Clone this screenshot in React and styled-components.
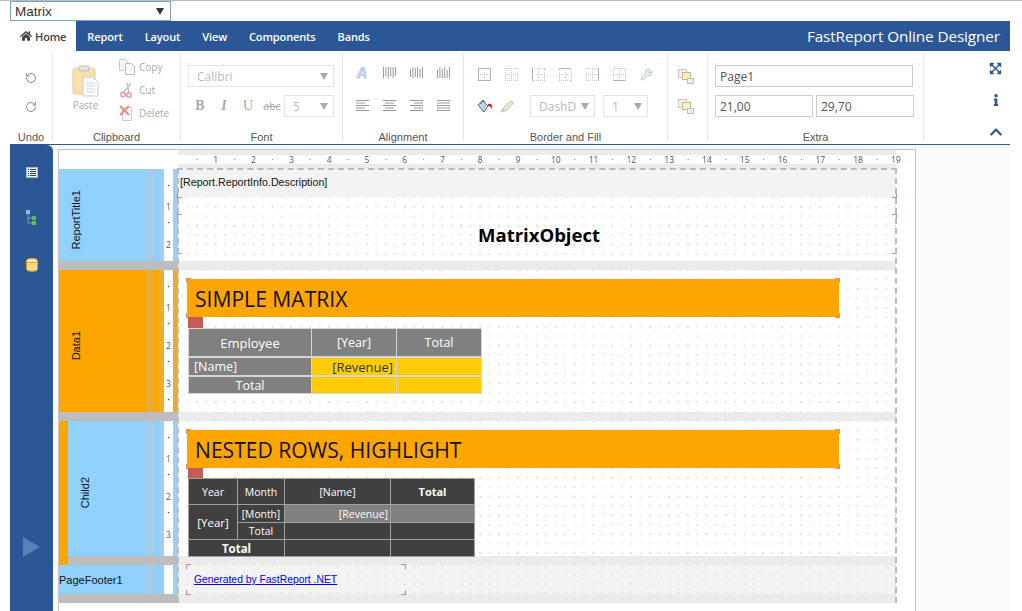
import React from "react";
import styled, { createGlobalStyle, css } from "styled-components";
import { FaHome, FaInfo, FaChevronUp, FaExpandArrowsAlt } from "react-icons/fa";
import { RotateCcw, RotateCw, Wrench } from "lucide-react";

const uiFont = `"Open Sans", "Noto Sans", "Liberation Sans", sans-serif`;
const smallFont = `"Liberation Sans", Arial, sans-serif`;
const blue = "#2b5797";

const GlobalStyle = createGlobalStyle`
  html, body {
    margin: 0;
    padding: 0;
    background: #fff;
    font-family: ${uiFont};
  }
  * { box-sizing: border-box; }
`;

const Root = styled.div`
  width: 1022px;
  height: 611px;
  overflow: hidden;
  border-top: 1px solid #bbb;
  padding: 0 12px 0 10px;
`;

const ReportSelect = styled.div`
  width: 161px;
  height: 20px;
  border: 1px solid #7a9fd4;
  display: flex;
  align-items: center;
  justify-content: space-between;
  padding: 0 6px 0 4px;
  font-family: ${smallFont};
  font-size: 13.5px;
  color: #333;
`;

const Arrow = styled.span`
  width: 0;
  height: 0;
  border-left: 4px solid transparent;
  border-right: 4px solid transparent;
  border-top: 7px solid ${(p) => (p.$muted ? "#aaa" : "#333")};
`;

const NavBar = styled.div`
  height: 30px;
  background: ${blue};
  display: flex;
  align-items: stretch;
  color: #fff;
`;

const NavTab = styled.div`
  display: flex;
  align-items: center;
  gap: 3px;
  padding: ${(p) => (p.$active ? "0 10px" : "0 11px")};
  background: ${(p) => (p.$active ? "#fff" : "transparent")};
  color: ${(p) => (p.$active ? "#444" : "#fff")};
  font-size: 11px;
  font-weight: 600;
  letter-spacing: -0.12px;
`;

const NavTitle = styled.div`
  margin-left: auto;
  padding-right: 10px;
  align-self: center;
  font-size: 15.3px;
  letter-spacing: -0.1px;
`;

const Ribbon = styled.div`
  height: 94px;
  display: flex;
  padding: 3px 0 3px;
  border-bottom: 1px solid ${blue};
  background: #fff;
`;

const Group = styled.div`
  width: ${(p) => p.$width}px;
  display: flex;
  flex-direction: column;
  border-right: ${(p) => (p.$plain ? "none" : "1px solid #e4e4e4")};
`;

const GroupBody = styled.div`
  flex: 1;
  min-height: 0;
  display: flex;
  flex-direction: ${(p) => p.$dir || "column"};
  align-items: ${(p) => p.$align || "stretch"};
  padding: ${(p) => p.$pad || "0"};
  gap: ${(p) => p.$gap || "0"};
`;

const GroupLabel = styled.div`
  height: 14px;
  line-height: 14px;
  margin-bottom: -3px;
  text-align: center;
  font-family: ${smallFont};
  font-size: 11px;
  color: #555;
`;

const ToolRow = styled.div`
  display: flex;
  align-items: center;
  height: 22px;
  gap: ${(p) => p.$gap || "0"};
  margin-bottom: ${(p) => p.$below || "0"};
`;

const IconSlot = styled.span`
  width: ${(p) => p.$w || 27}px;
  display: inline-flex;
  justify-content: center;
  align-items: center;
  flex: none;
`;

const SmallButton = styled.div`
  display: flex;
  align-items: center;
  height: 23px;
  gap: 4px;
  font-size: 10px;
  color: #aaa;
`;

const SmallButtons = styled.div`
  padding-top: 1px;
`;

const PasteButton = styled.div`
  width: 66px;
  display: flex;
  flex-direction: column;
  align-items: center;
  padding: 11px 1px 0 0;
  gap: 1px;
  font-size: 10px;
  color: #aaa;
`;

const FakeSelect = styled.div`
  width: ${(p) => p.$w}px;
  height: 22px;
  flex: none;
  margin-left: ${(p) => p.$ml || 0}px;
  display: flex;
  align-items: center;
  justify-content: space-between;
  padding: 0 5px 0 8px;
  border: 1px solid #e4e4e4;
  font-size: 12px;
  color: #bbb;
`;

const FieldInput = styled.div`
  width: ${(p) => p.$w}px;
  height: 22px;
  flex: none;
  border: 1px solid #ccc;
  display: flex;
  align-items: center;
  padding-left: 4px;
  font-size: 12px;
  color: #555;
`;

const FontGlyph = styled.span`
  width: ${(p) => p.$w || 24}px;
  text-align: center;
  font-family: ${(p) => (p.$sans ? uiFont : `"Liberation Serif", serif`)};
  font-size: ${(p) => (p.$sans ? "10.5px" : "14px")};
  font-weight: ${(p) => (p.$bold ? 700 : 400)};
  font-style: ${(p) => (p.$italic ? "italic" : "normal")};
  text-decoration: ${(p) => p.$line || "none"};
  color: #aaa;
`;

const SideTools = styled.div`
  flex: 1;
  display: flex;
  flex-direction: column;
  align-items: center;
  color: ${blue};
  padding: 8px 0 0 57px;
  gap: 19px;
`;

const Workspace = styled.div`
  height: 466px;
  display: flex;
  background: #fafafa;
`;

const Sidebar = styled.div`
  width: 43px;
  background: ${blue};
  border-top-right-radius: 6px;
  display: flex;
  flex-direction: column;
  align-items: center;
  padding: 22px 0 54px;
  gap: 32px;
`;

const PlayMark = styled.div`
  margin-top: auto;
  width: 0;
  height: 0;
  border-top: 10px solid transparent;
  border-bottom: 10px solid transparent;
  border-left: 17px solid #5b80b6;
`;

const PageWrap = styled.div`
  padding: 4px 0 0 5px;
`;

const Page = styled.div`
  width: 858px;
  height: 462px;
  background: #fff;
  border: 1px solid #c4c4c4;
  border-bottom: none;
  display: flex;
`;

const BandColumn = styled.div`
  width: 119px;
  flex: none;
  padding-top: 19px;
`;

const SheetColumn = styled.div`
  width: 718px;
  flex: none;
`;

const TopRuler = styled.div`
  height: 19px;
  background: #ebebeb;
  padding-top: 5px;
`;

const TopRulerScale = styled.div`
  height: 9px;
  background: #fff;
  display: flex;
  padding-left: 9.45px;
`;

const RulerMark = styled.span`
  width: 18.9px;
  flex: none;
  text-align: center;
  font-size: 8.5px;
  line-height: 10px;
  color: #555;
  white-space: nowrap;
`;

const BandHeader = styled.div`
  height: ${(p) => p.$height}px;
  display: flex;
  background: ${(p) => (p.$orange ? "#ffa500" : "#90d1ff")};
`;

const BandTitle = styled.div`
  width: ${(p) => p.$width || 86}px;
  flex: none;
  display: flex;
  align-items: center;
  justify-content: ${(p) => (p.$flat ? "flex-start" : "center")};
  padding: ${(p) => (p.$flat ? "0" : `9px ${p.$right || 53}px 0 0`)};
  font-family: ${smallFont};
  font-size: 11px;
  color: #111;
  ${(p) =>
    !p.$flat &&
    css`
      & > span {
        writing-mode: vertical-rl;
        transform: rotate(180deg);
      }
    `}
`;

const BandStrip = styled.div`
  width: ${(p) => p.$width}px;
  flex: none;
  background: ${(p) => (p.$orange ? p.$hot : p.$cool)};
`;

const SideRuler = styled.div`
  width: 9px;
  flex: none;
  background: #fff;
  display: flex;
  flex-direction: column;
  align-items: center;
  padding-top: 10.5px;
  overflow: hidden;
`;

const SideRulerMark = styled.span`
  height: 18.9px;
  flex: none;
  font-size: 8.5px;
  line-height: 18.9px;
  color: #555;
`;

const SideRulerDot = styled(SideRulerMark)`
  font-weight: 700;
  color: #333;
  transform: translateY(-3px);
`;

const BandGap = styled.div`
  height: 9px;
  background: #bdbdbd;
`;

const ChildBand = styled.div`
  display: flex;
`;

const ChildEdge = styled.div`
  width: 9px;
  flex: none;
  background: #ffa500;
`;

const ChildBody = styled.div`
  flex: 1;
  min-width: 0;
`;

const Sheet = styled.div`
  position: relative;
`;

const SheetFrame = styled.div`
  position: absolute;
  top: -1px;
  left: -1px;
  right: -1px;
  height: 435px;
  border: 2px dashed #bbb;
  border-bottom: none;
  pointer-events: none;
  z-index: 3;
`;

const dots = css`
  background-image: radial-gradient(circle, #c4c4c4 0.5px, transparent 0.8px),
    radial-gradient(circle, #e2e2e2 0.6px, transparent 0.9px);
  background-size: 18.9px 18.9px, 9.45px 9.45px;
  background-position: -9.45px -9.45px, -4.72px -4.72px;
`;

const ReportBand = styled.div`
  height: ${(p) => p.$height}px;
  padding: ${(p) => p.$pad || "0"};
  background-color: ${(p) => (p.$shaded ? "#f3f3f3" : "#fff")};
  ${dots}
`;

const ReportGap = styled.div`
  height: 9px;
  background: #ebebeb;
`;

const InfoText = styled.div`
  position: relative;
  height: 28px;
  background: #f3f3f3;
  padding: 6px 0 0 2px;
  font-family: ${smallFont};
  font-size: 10.7px;
  line-height: 15px;
  color: #111;
`;

const TitleObject = styled.div`
  position: relative;
  height: 38px;
  margin-top: 18px;
  display: flex;
  align-items: center;
  justify-content: center;
  padding-left: 4px;
  font-size: 18.5px;
  font-weight: 700;
  color: #000;
`;

const Banner = styled.div`
  position: relative;
  width: 652px;
  height: 38px;
  margin-left: 9px;
  background: #ffa500;
  display: flex;
  align-items: center;
  padding-left: 8px;
  font-size: 21.1px;
  color: #111;
`;

const MatrixTab = styled.div`
  width: 15px;
  height: ${(p) => p.$height}px;
  margin-left: 10px;
  background: #c45c5c;
`;

const Matrix = styled.div`
  display: inline-grid;
  margin-left: 10px;
  padding: 1px;
  vertical-align: top;
  grid-template-columns: ${(p) => p.$cols};
  grid-template-rows: ${(p) => p.$rows};
  gap: ${(p) => p.$gap};
  background: ${(p) => p.$line};
`;

const Cell = styled.div`
  display: flex;
  align-items: center;
  justify-content: ${(p) => p.$justify || "center"};
  padding: ${(p) => p.$pad || "0"};
  background: ${(p) => p.$bg};
  color: ${(p) => p.$color || "#fff"};
  font-size: ${(p) => p.$size || 12}px;
  font-weight: ${(p) => (p.$bold ? 700 : 400)};
  grid-column: ${(p) => p.$colSpan || "auto"};
  grid-row: ${(p) => p.$rowSpan || "auto"};
  white-space: nowrap;
`;

const FooterLink = styled.div`
  position: relative;
  width: 218px;
  height: 29px;
  margin-left: 9px;
  padding: 8px 0 0 7px;
  font-family: ${smallFont};
  font-size: 10.35px;
  line-height: 14px;
  color: #00e;
  text-decoration: underline;
`;

const Corner = styled.i`
  position: absolute;
  width: 5px;
  height: 5px;
  border: 0 solid rgba(196, 80, 80, 0.65);
  ${(p) => (p.$y === "top" ? "top: -1px; border-top-width: 1.5px;" : "bottom: -1px; border-bottom-width: 1.5px;")}
  ${(p) => (p.$x === "left" ? "left: -1px; border-left-width: 1.5px;" : "right: -1px; border-right-width: 1.5px;")}
`;

function Corners() {
  return (
    <>
      <Corner $x="left" $y="top" />
      <Corner $x="right" $y="top" />
      <Corner $x="left" $y="bottom" />
      <Corner $x="right" $y="bottom" />
    </>
  );
}

function Lines({ rows, color = "#999" }) {
  return (
    <svg width="13" height="13" viewBox="0 0 13 13">
      {rows.map(([x1, x2], i) => (
        <line key={i} x1={x1} x2={x2} y1={1.5 + i * 2.5} y2={1.5 + i * 2.5} stroke={color} />
      ))}
    </svg>
  );
}

function Bars({ cols }) {
  return (
    <svg width="13" height="13" viewBox="0 0 13 13">
      {cols.map(([y1, y2], i) => (
        <line key={i} x1={0.5 + i * 2.4} x2={0.5 + i * 2.4} y1={y1} y2={y2} stroke="#999" />
      ))}
    </svg>
  );
}

function BorderBox({ edges = "" }) {
  const d = "#c8c8c8";
  const s = "#aab4bf";
  const edge = (key, x1, y1, x2, y2) => (
    <line
      x1={x1}
      y1={y1}
      x2={x2}
      y2={y2}
      stroke={edges.includes(key) ? s : d}
      strokeDasharray={edges.includes(key) ? "none" : "1 1"}
    />
  );
  return (
    <svg width="13" height="13" viewBox="0 0 13 13">
      {edge("x", 6.5, 0, 6.5, 13)}
      {edge("y", 0, 6.5, 13, 6.5)}
      {edge("t", 0, 0.5, 13, 0.5)}
      {edge("b", 0, 12.5, 13, 12.5)}
      {edge("l", 0.5, 0, 0.5, 13)}
      {edge("r", 12.5, 0, 12.5, 13)}
    </svg>
  );
}

function PasteIcon() {
  return (
    <svg width="28" height="32" viewBox="0 0 28 32">
      <rect x="1" y="3" width="22" height="26" rx="1.5" fill="#f8e0a8" stroke="#e4cf9c" />
      <rect x="7" y="1" width="10" height="5" rx="1" fill="#e2e2e2" stroke="#bdbdbd" />
      <path d="M11 12h10l5 5v14H11z" fill="#fbfbfb" stroke="#c6ccd4" />
      <path d="M14 18h9M14 21h9M14 24h9M14 27h9" stroke="#d0d6de" />
    </svg>
  );
}

function CopyIcon() {
  return (
    <svg width="16" height="16" viewBox="0 0 16 16">
      <path d="M.5.5h6l2 2v9h-8z" fill="#f4f4f4" stroke="#c4ccd8" />
      <path d="M6.5 4.5h6l3 3v8h-9z" fill="#fafafa" stroke="#b8c0cc" />
    </svg>
  );
}

function CutIcon() {
  return (
    <svg width="16" height="16" viewBox="0 0 16 16">
      <path d="M5 10 12 1M10 10 8 1" stroke="#b8c0cc" strokeWidth="1.4" fill="none" />
      <circle cx="4" cy="12.5" r="2.2" fill="none" stroke="#ea9a90" strokeWidth="1.4" />
      <circle cx="10" cy="13" r="2.2" fill="none" stroke="#ea9a90" strokeWidth="1.4" />
    </svg>
  );
}

function DeleteIcon() {
  return (
    <svg width="16" height="16" viewBox="0 0 16 16">
      <path d="M3.5 2.5h9v13h-9z" fill="#f6f6f6" stroke="#c4ccd8" />
      <path d="M1 1l9 9M10 1l-9 9" stroke="#ec8f80" strokeWidth="2" />
    </svg>
  );
}

function FontA() {
  return (
    <svg width="13" height="13" viewBox="0 0 13 13">
      <path d="M0 12.5 5 1h4l2 11.5H8L7.6 10H5l-1 2.500zM5.800 8h1.600L7 4.500z" fill="#bcd0ea" />
    </svg>
  );
}

function PaintIcon() {
  return (
    <svg width="16" height="14" viewBox="0 0 16 14">
      <path d="M1 6l5-4 5 5-4 6z" fill="#bcd6ea" stroke="#667" />
      <path d="M4 5C4 1 7 0 8 3" fill="none" stroke="#667" />
      <path d="M11 5c3-1 5 1 4 5-1-2-2-3-4-3z" fill="#d22" />
    </svg>
  );
}

function PenIcon() {
  return (
    <svg width="15" height="13" viewBox="0 0 15 13">
      <path d="M1 12l2-4 7-7 4 2-7 7z" fill="#f0e4c0" stroke="#c2cfe0" />
      <path d="M1 12l2-4 2 3z" fill="#b6c8e0" />
    </svg>
  );
}

function LayerIcon({ back, front }) {
  return (
    <svg width="16" height="15" viewBox="0 0 16 15">
      <rect x="0.500" y="0.500" width="8" height="8" fill={back} stroke="#c8c8c8" />
      <rect x="4.500" y="3.500" width="8" height="7" fill={front} stroke="#c8b880" />
      <rect x="9.500" y="9.500" width="6" height="5" fill="#eee" stroke="#c0c0c0" />
    </svg>
  );
}

function TableIcon() {
  return (
    <svg width="12" height="11" viewBox="0 0 12 11">
      <rect x="0.500" y="0.500" width="11" height="10" fill="#eef2f8" stroke="#a8b8d0" />
      <path d="M2 2.500h1M2 4.500h1M2 6.500h1M2 8.500h1M4 2.500h6M4 4.500h6M4 6.500h6M4 8.500h6" stroke="#2f3f55" />
    </svg>
  );
}

function TreeIcon() {
  return (
    <svg width="11" height="16" viewBox="0 0 11 16">
      <rect width="4" height="4" fill="#8fb4ea" />
      <path d="M2 4v9h4M2 8h4" stroke="#8a98a8" fill="none" />
      <rect x="6" y="6" width="4" height="4" fill="#5cc04a" />
      <rect x="6" y="11" width="4" height="4" fill="#5cc04a" />
    </svg>
  );
}

function DatabaseIcon() {
  return (
    <svg width="12" height="14" viewBox="0 0 12 14">
      <path d="M.5 2.500v9c0 2.400 11 2.400 11 0v-9z" fill="#f7d98c" stroke="#e09a18" />
      <ellipse cx="6" cy="2.500" rx="5.500" ry="2" fill="#fff4cc" stroke="#e09a18" />
    </svg>
  );
}

const tabs = ["Report", "Layout", "View", "Components", "Bands"];

const rulerMarks = Array.from({ length: 38 }, (_, i) =>
  i % 2 === 1 ? String((i + 1) / 2) : "·"
);

function ColumnRuler({ count }) {
  return (
    <SideRuler>
      {Array.from({ length: count }, (_, i) =>
        i % 2 === 1 ? (
          <SideRulerMark key={i}>{(i + 1) / 2}</SideRulerMark>
        ) : (
          <SideRulerDot key={i}>·</SideRulerDot>
        )
      )}
    </SideRuler>
  );
}

function BandStrips({ orange, count }) {
  return (
    <>
      <BandStrip $width={9} $orange={orange} $hot="#e8ac34" $cool="#a5cde9" />
      <BandStrip $width={5} $orange={orange} $hot="#fba808" $cool="#92d0fb" />
      <BandStrip $width={5} $orange={orange} $hot="#edad30" $cool="#a0cdf0" />
      <ColumnRuler count={count} />
      <BandStrip $width={5} $orange={orange} $hot="#e8ac34" $cool="#a0cdf0" />
    </>
  );
}

function App() {
  return (
    <Root>
      <GlobalStyle />
      <ReportSelect>
        Matrix
        <Arrow />
      </ReportSelect>
      <NavBar>
        <NavTab $active>
          <FaHome size={12} />
          Home
        </NavTab>
        {tabs.map((t) => (
          <NavTab key={t}>{t}</NavTab>
        ))}
        <NavTitle>FastReport Online Designer</NavTitle>
      </NavBar>

      <Ribbon>
        <Group $width={43}>
          <GroupBody $align="center" $pad="18px 0 0" $gap="17px">
            <RotateCcw size={12} color="#888" />
            <RotateCw size={12} color="#888" />
          </GroupBody>
          <GroupLabel>Undo</GroupLabel>
        </Group>
        <Group $width={128}>
          <GroupBody $dir="row">
            <PasteButton>
              <PasteIcon />
              Paste
            </PasteButton>
            <SmallButtons>
              <SmallButton>
                <CopyIcon />
                Copy
              </SmallButton>
              <SmallButton>
                <CutIcon />
                Cut
              </SmallButton>
              <SmallButton>
                <DeleteIcon />
                Delete
              </SmallButton>
            </SmallButtons>
          </GroupBody>
          <GroupLabel>Clipboard</GroupLabel>
        </Group>
        <Group $width={162}>
          <GroupBody $pad="11px 0 0 7px">
            <ToolRow $below="8px">
              <FakeSelect $w={146}>
                Calibri
                <Arrow $muted />
              </FakeSelect>
            </ToolRow>
            <ToolRow>
              <FontGlyph $bold>B</FontGlyph>
              <FontGlyph $italic $bold>I</FontGlyph>
              <FontGlyph>U</FontGlyph>
              <FontGlyph $sans $line="line-through" $w={24}>abc</FontGlyph>
              <FakeSelect $w={50}>
                5
                <Arrow $muted />
              </FakeSelect>
            </ToolRow>
          </GroupBody>
          <GroupLabel>Font</GroupLabel>
        </Group>
        <Group $width={121}>
          <GroupBody $pad="7px 0 0 6px">
            <ToolRow $below="11px">
              <IconSlot><FontA /></IconSlot>
              <IconSlot><Bars cols={[[1, 12], [1, 10], [1, 12], [1, 10], [1, 12], [1, 10]]} /></IconSlot>
              <IconSlot><Bars cols={[[3, 11], [1, 12], [2, 11], [1, 12], [3, 11], [1, 12]]} /></IconSlot>
              <IconSlot><Bars cols={[[4, 12], [1, 12], [3, 12], [1, 12], [4, 12], [1, 12]]} /></IconSlot>
            </ToolRow>
            <ToolRow>
              <IconSlot><Lines rows={[[0, 13], [0, 9], [0, 13], [0, 9], [0, 13]]} /></IconSlot>
              <IconSlot><Lines rows={[[0, 13], [2, 11], [0, 13], [2, 11], [0, 13]]} /></IconSlot>
              <IconSlot><Lines rows={[[0, 13], [4, 13], [0, 13], [4, 13], [0, 13]]} /></IconSlot>
              <IconSlot><Lines rows={[[0, 13], [0, 13], [0, 13], [0, 13], [0, 13]]} /></IconSlot>
            </ToolRow>
          </GroupBody>
          <GroupLabel>Alignment</GroupLabel>
        </Group>
        <Group $width={204}>
          <GroupBody $pad="9px 0 0 7px">
            <ToolRow $below="10px">
              <IconSlot><BorderBox edges="tblr" /></IconSlot>
              <IconSlot><BorderBox /></IconSlot>
              <IconSlot><BorderBox edges="l" /></IconSlot>
              <IconSlot><BorderBox edges="t" /></IconSlot>
              <IconSlot><BorderBox edges="r" /></IconSlot>
              <IconSlot><BorderBox edges="b" /></IconSlot>
              <IconSlot><Wrench size={13} color="#b8c8dc" /></IconSlot>
            </ToolRow>
            <ToolRow>
              <IconSlot><PaintIcon /></IconSlot>
              <IconSlot $w={19}><PenIcon /></IconSlot>
              <FakeSelect $w={65} $ml={13}>
                DashD
                <Arrow $muted />
              </FakeSelect>
              <FakeSelect $w={45} $ml={8}>
                1
                <Arrow $muted />
              </FakeSelect>
            </ToolRow>
          </GroupBody>
          <GroupLabel>Border and Fill</GroupLabel>
        </Group>
        <Group $width={40}>
          <GroupBody $align="center" $pad="15px 3px 0 0" $gap="15px">
            <LayerIcon back="#eee" front="#fbeeb8" />
            <LayerIcon back="#f2f2f2" front="#fbf0c8" />
          </GroupBody>
          <GroupLabel>&nbsp;</GroupLabel>
        </Group>
        <Group $width={216}>
          <GroupBody $pad="11px 0 0 7px">
            <ToolRow $below="8px">
              <FieldInput $w={198}>Page1</FieldInput>
            </ToolRow>
            <ToolRow $gap="3px">
              <FieldInput $w={98}>21,00</FieldInput>
              <FieldInput $w={98}>29,70</FieldInput>
            </ToolRow>
          </GroupBody>
          <GroupLabel>Extra</GroupLabel>
        </Group>
        <Group $width={86} $plain>
          <SideTools>
            <FaExpandArrowsAlt size={13} />
            <FaInfo size={12} />
            <FaChevronUp size={14} />
          </SideTools>
        </Group>
      </Ribbon>

      <Workspace>
        <Sidebar>
          <TableIcon />
          <TreeIcon />
          <DatabaseIcon />
          <PlayMark />
        </Sidebar>
        <PageWrap>
          <Page>
            <BandColumn>
              <BandHeader $height={92}>
                <BandTitle><span>ReportTitle1</span></BandTitle>
                <BandStrips count={4} />
              </BandHeader>
              <BandGap />
              <BandHeader $height={142} $orange>
                <BandTitle><span>Data1</span></BandTitle>
                <BandStrips orange count={7} />
              </BandHeader>
              <BandGap />
              <ChildBand>
                <ChildEdge />
                <ChildBody>
                  <BandHeader $height={135}>
                    <BandTitle $width={77} $right={43}><span>Child2</span></BandTitle>
                    <BandStrips count={6} />
                  </BandHeader>
                  <BandGap />
                </ChildBody>
              </ChildBand>
              <BandHeader $height={29}>
                <BandTitle $flat><span>PageFooter1</span></BandTitle>
                <BandStrip $width={9} $cool="#a5cde9" />
                <BandStrip $width={10} $cool="#92d0fb" />
                <SideRuler />
                <BandStrip $width={5} $cool="#a0cdf0" />
              </BandHeader>
              <BandGap />
            </BandColumn>

            <SheetColumn>
              <TopRuler>
                <TopRulerScale>
                  {rulerMarks.map((m, i) => (
                    <RulerMark key={i}>{m}</RulerMark>
                  ))}
                </TopRulerScale>
              </TopRuler>
              <Sheet>
                <SheetFrame />
                <ReportBand $height={92}>
                  <InfoText>
                    [Report.ReportInfo.Description]
                    <Corners />
                  </InfoText>
                  <TitleObject>
                    MatrixObject
                    <Corners />
                  </TitleObject>
                </ReportBand>
                <ReportGap />
                <ReportBand $height={142} $pad="9px 0 0">
                  <Banner>
                    SIMPLE MATRIX
                    <Corners />
                  </Banner>
                  <MatrixTab $height={11} />
                  <Matrix $cols="122px 84px 84px" $rows="27px 17px 16px" $gap="2px 1px" $line="#d4d4d4">
                    <Cell $bg="#808080" $size={13}>Employee</Cell>
                    <Cell $bg="#808080" $size={12.5}>[Year]</Cell>
                    <Cell $bg="#808080" $size={12.5}>Total</Cell>
                    <Cell $bg="#808080" $size={12.5} $justify="flex-start" $pad="0 0 0 5px">[Name]</Cell>
                    <Cell $bg="#ffcc00" $color="#333" $size={13} $justify="flex-end" $pad="0 3px 0 0">[Revenue]</Cell>
                    <Cell $bg="#ffcc00" />
                    <Cell $bg="#808080" $size={12.5}>Total</Cell>
                    <Cell $bg="#ffcc00" />
                    <Cell $bg="#ffcc00" />
                  </Matrix>
                </ReportBand>
                <ReportGap />
                <ReportBand $height={135} $pad="9px 0 0">
                  <Banner>
                    NESTED ROWS, HIGHLIGHT
                    <Corners />
                  </Banner>
                  <MatrixTab $height={10} />
                  <Matrix $cols="48px 46px 105px 83px" $rows="25px 17px 16px 16px" $gap="1px" $line="#a0a0a0">
                    <Cell $bg="#404040" $size={10.5}>Year</Cell>
                    <Cell $bg="#404040" $size={10.5}>Month</Cell>
                    <Cell $bg="#404040" $size={10.5}>[Name]</Cell>
                    <Cell $bg="#404040" $size={11} $bold>Total</Cell>
                    <Cell $bg="#404040" $size={11.5} $rowSpan="span 2">[Year]</Cell>
                    <Cell $bg="#404040" $size={10.3}>[Month]</Cell>
                    <Cell $bg="#808080" $size={10.5} $justify="flex-end" $pad="0 2px 0 0">[Revenue]</Cell>
                    <Cell $bg="#808080" />
                    <Cell $bg="#404040" $size={10.5}>Total</Cell>
                    <Cell $bg="#404040" />
                    <Cell $bg="#404040" />
                    <Cell $bg="#404040" $size={11.5} $bold $colSpan="span 2">Total</Cell>
                    <Cell $bg="#404040" />
                    <Cell $bg="#404040" />
                  </Matrix>
                </ReportBand>
                <ReportGap />
                <ReportBand $height={29} $shaded>
                  <FooterLink>
                    Generated by FastReport .NET
                    <Corners />
                  </FooterLink>
                </ReportBand>
                <ReportGap />
              </Sheet>
            </SheetColumn>
          </Page>
        </PageWrap>
      </Workspace>
    </Root>
  );
}

export default App;
